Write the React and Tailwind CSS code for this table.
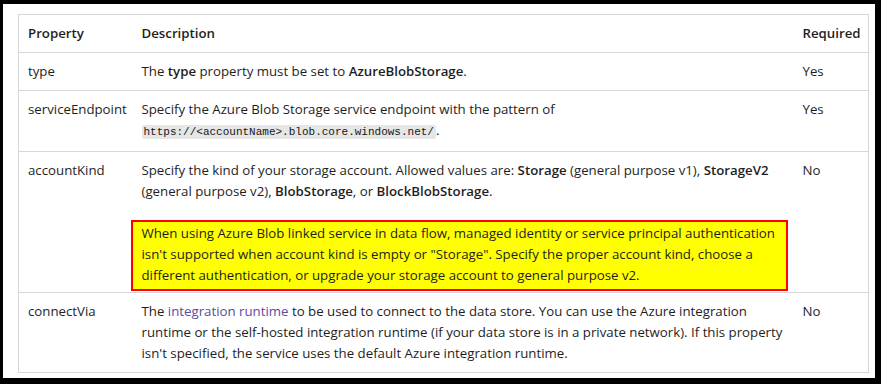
export default function App() {
  const font = { fontFamily: '"Open Sans", "Noto Sans", sans-serif' };
  return (
    <div className="w-[881px] h-[384px] bg-black pt-[4px] pl-[3px] pr-[6px] pb-[6px] overflow-hidden">
      <div
        className="h-full bg-white pl-[15px] pt-[10px] pr-[6px] pb-[5px] text-[13.25px] leading-[21px] text-[#1e1e1e]"
        style={font}
      >
        <table className="w-full border border-[#d6d6d6] border-collapse table-fixed">
          <colgroup>
            <col className="w-[113px]" />
            <col className="w-[661px]" />
            <col />
          </colgroup>
          <thead>
            <tr className="border-b border-[#d6d6d6]">
              <th className="pl-[9px] pt-[8px] pb-[8px] text-left font-semibold">Property</th>
              <th className="pl-[10px] pt-[8px] pb-[8px] text-left font-semibold">Description</th>
              <th className="pl-[10px] pt-[8px] pb-[8px] text-left font-semibold">Required</th>
            </tr>
          </thead>
          <tbody>
            <tr className="border-b border-[#d6d6d6] align-top">
              <td className="pl-[9px] pt-[8px] pb-[8px]">type</td>
              <td className="pl-[10px] pt-[8px] pb-[8px]">
                The <b className="font-semibold">type</b> property must be set to{" "}
                <b className="font-semibold">AzureBlobStorage</b>.
              </td>
              <td className="pl-[10px] pt-[8px] pb-[8px]">Yes</td>
            </tr>
            <tr className="border-b border-[#d6d6d6] align-top">
              <td className="pl-[9px] pt-[8px] pb-[8px]">serviceEndpoint</td>
              <td className="pl-[10px] pt-[8px] pb-[8px]">
                Specify the Azure Blob Storage service endpoint with the pattern of
                <br />
                <code
                  className="bg-[#e6e6e6] rounded-[3px] px-[2px] py-[1px] text-[11px] text-[#171717]"
                  style={{ fontFamily: '"Liberation Mono", monospace' }}
                >
                  https://&lt;accountName&gt;.blob.core.windows.net/
                </code>
                .
              </td>
              <td className="pl-[10px] pt-[8px] pb-[8px]">Yes</td>
            </tr>
            <tr className="border-b border-[#d6d6d6] align-top">
              <td className="pl-[9px] pt-[8px] pb-[2px]">accountKind</td>
              <td className="pl-[10px] pr-[8px] pt-[8px] pb-[1px]">
                <p>
                  Specify the kind of your storage account. Allowed values are:{" "}
                  <b className="font-semibold">Storage</b> (general purpose v1),{" "}
                  <b className="font-semibold">StorageV2</b> (general purpose v2),{" "}
                  <b className="font-semibold">BlobStorage</b>, or{" "}
                  <b className="font-semibold">BlockBlobStorage</b>.
                </p>
                <div className="mt-[18px] -ml-[11px] w-[657px] border-2 border-[#ff0000] bg-[#ffff00] pl-[9px] pr-[4px] pt-[1px] pb-[3px]">
                  When using Azure Blob linked service in data flow, managed identity or service
                  principal authentication isn't supported when account kind is empty or
                  "Storage". Specify the proper account kind, choose a different authentication,
                  or upgrade your storage account to general purpose v2.
                </div>
              </td>
              <td className="pl-[10px] pt-[8px] pb-[2px]">No</td>
            </tr>
            <tr className="align-top">
              <td className="pl-[9px] pt-[8px] pb-[8px]">connectVia</td>
              <td className="pl-[10px] pr-[8px] pt-[8px] pb-[8px]">
                The <span className="text-[#5c4aa6]">integration runtime</span> to be used to
                connect to the data store. You can use the Azure integration runtime or the
                self-hosted integration runtime (if your data store is in a private network). If
                this property isn't specified, the service uses the default Azure integration
                runtime.
              </td>
              <td className="pl-[10px] pt-[8px] pb-[8px]">No</td>
            </tr>
          </tbody>
        </table>
      </div>
    </div>
  );
}
